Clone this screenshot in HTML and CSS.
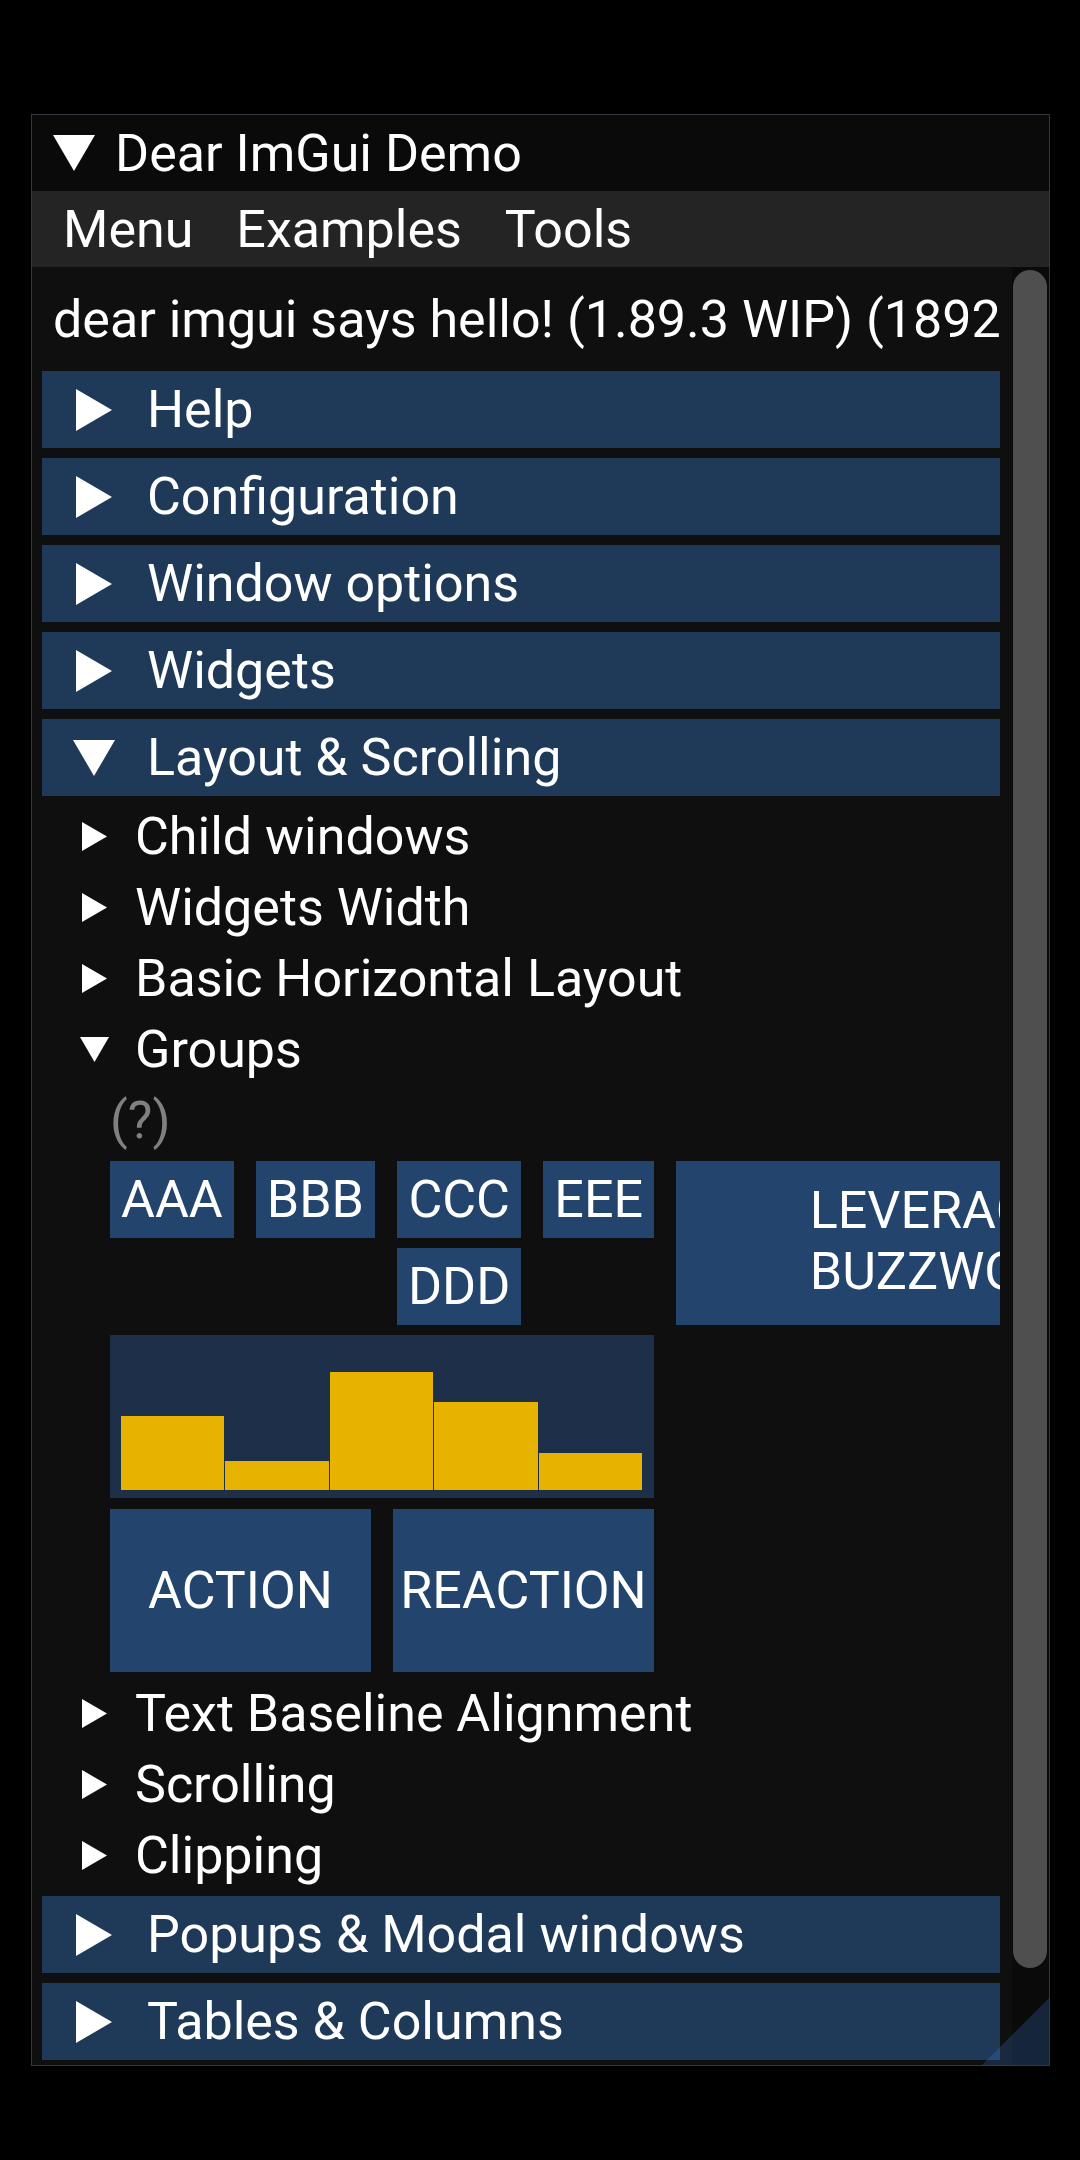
FILE: index.html
```html
<!DOCTYPE html>
<html lang="en">
<head>
<meta charset="utf-8">
<title>Dear ImGui Demo</title>
<link rel="stylesheet" href="styles.css">
</head>
<body>
<div class="window">
  <div class="titlebar">
    <svg class="arrow-lg" viewBox="0 0 42 42"><polygon points="0,3 42,3 21,39" fill="#fff"/></svg>
    <span class="title">Dear ImGui Demo</span>
  </div>
  <div class="menubar">
    <span>Menu</span><span>Examples</span><span>Tools</span>
  </div>
  <div class="body">
    <div class="content">
      <div class="clip">
        <div class="text-line">dear imgui says hello! (1.89.3 WIP) (18927)</div>

        <div class="header"><svg class="arrow-lg" viewBox="0 0 42 42"><polygon points="3,0 39,21 3,42" fill="#fff"/></svg><span class="label">Help</span></div>
        <div class="header"><svg class="arrow-lg" viewBox="0 0 42 42"><polygon points="3,0 39,21 3,42" fill="#fff"/></svg><span class="label">Configuration</span></div>
        <div class="header"><svg class="arrow-lg" viewBox="0 0 42 42"><polygon points="3,0 39,21 3,42" fill="#fff"/></svg><span class="label">Window options</span></div>
        <div class="header"><svg class="arrow-lg" viewBox="0 0 42 42"><polygon points="3,0 39,21 3,42" fill="#fff"/></svg><span class="label">Widgets</span></div>
        <div class="header"><svg class="arrow-lg" viewBox="0 0 42 42"><polygon points="0,3 42,3 21,39" fill="#fff"/></svg><span class="label">Layout &amp; Scrolling</span></div>

        <div class="tree"><svg class="arrow-sm" viewBox="0 0 29 29"><polygon points="2,0 27,14.5 2,29" fill="#fff"/></svg><span class="label">Child windows</span></div>
        <div class="tree"><svg class="arrow-sm" viewBox="0 0 29 29"><polygon points="2,0 27,14.5 2,29" fill="#fff"/></svg><span class="label">Widgets Width</span></div>
        <div class="tree"><svg class="arrow-sm" viewBox="0 0 29 29"><polygon points="2,0 27,14.5 2,29" fill="#fff"/></svg><span class="label">Basic Horizontal Layout</span></div>
        <div class="tree"><svg class="arrow-sm" viewBox="0 0 29 29"><polygon points="0,2 29,2 14.5,27" fill="#fff"/></svg><span class="label">Groups</span></div>

        <div class="indent">
          <div class="disabled">(?)</div>
          <div class="btn-row">
            <div class="btn">AAA</div>
            <div class="btn">BBB</div>
            <div class="btn-col">
              <div class="btn">CCC</div>
              <div class="btn">DDD</div>
            </div>
            <div class="btn">EEE</div>
            <div class="btn big"><span class="multi">LEVERAGE<br>BUZZWORD</span></div>
          </div>
          <div class="plot">
            <div class="bar" style="height:50%"></div>
            <div class="bar" style="height:20%"></div>
            <div class="bar" style="height:80%"></div>
            <div class="bar" style="height:60%"></div>
            <div class="bar" style="height:25%"></div>
          </div>
          <div class="ar-row">
            <div class="btn tall">ACTION</div>
            <div class="btn tall">REACTION</div>
          </div>
        </div>

        <div class="tree"><svg class="arrow-sm" viewBox="0 0 29 29"><polygon points="2,0 27,14.5 2,29" fill="#fff"/></svg><span class="label">Text Baseline Alignment</span></div>
        <div class="tree"><svg class="arrow-sm" viewBox="0 0 29 29"><polygon points="2,0 27,14.5 2,29" fill="#fff"/></svg><span class="label">Scrolling</span></div>
        <div class="tree"><svg class="arrow-sm" viewBox="0 0 29 29"><polygon points="2,0 27,14.5 2,29" fill="#fff"/></svg><span class="label">Clipping</span></div>

        <div class="header"><svg class="arrow-lg" viewBox="0 0 42 42"><polygon points="3,0 39,21 3,42" fill="#fff"/></svg><span class="label">Popups &amp; Modal windows</span></div>
        <div class="header"><svg class="arrow-lg" viewBox="0 0 42 42"><polygon points="3,0 39,21 3,42" fill="#fff"/></svg><span class="label">Tables &amp; Columns</span></div>
      </div>
    </div>
    <div class="scrollbar"><div class="grab"></div></div>
  </div>
  <div class="grip"></div>
</div>
</body>
</html>
```

FILE: styles.css
```css
html, body {
  margin: 0;
  padding: 0;
  background: #000;
}

body {
  font-family: Roboto, "Liberation Sans", sans-serif;
  font-size: 52px;
  line-height: 61px;
  color: #fff;
  width: 1080px;
  height: 2160px;
  overflow: hidden;
}

.window {
  position: relative;
  margin: 114px 0 0 31px;
  width: 1019px;
  height: 1952px;
  box-sizing: border-box;
  border: 1px solid #37373f;
  display: flex;
  flex-direction: column;
  overflow: hidden;
}

.titlebar {
  height: 76px;
  flex-shrink: 0;
  background: #0a0a0a;
  display: flex;
  align-items: center;
  padding-left: 21px;
}

.titlebar .title {
  margin-left: 20px;
  white-space: nowrap;
}

.arrow-lg {
  width: 42px;
  height: 42px;
  flex-shrink: 0;
  display: block;
}

.arrow-sm {
  width: 29px;
  height: 29px;
  flex-shrink: 0;
  display: block;
}

.menubar {
  height: 76px;
  flex-shrink: 0;
  background: #242424;
  display: flex;
  align-items: center;
  gap: 43px;
  padding-left: 31px;
  white-space: nowrap;
}

.body {
  flex: 1;
  display: flex;
  min-height: 0;
}

.content {
  flex: 1;
  min-width: 0;
  background: #0f0f0f;
  padding: 22px 12px 0 10px;
  display: flex;
  flex-direction: column;
}

.clip {
  flex: 1;
  overflow: hidden;
}

.text-line {
  height: 61px;
  padding-left: 11px;
  white-space: nowrap;
  margin-bottom: 21px;
}

.header {
  height: 77px;
  margin-bottom: 10px;
  background: #1f3958;
  display: flex;
  align-items: center;
  padding-left: 31px;
  white-space: nowrap;
}

.header .label {
  margin-left: 32px;
}

.tree {
  height: 61px;
  margin-bottom: 10px;
  display: flex;
  align-items: center;
  padding-left: 38px;
  white-space: nowrap;
}

.tree .label {
  margin-left: 26px;
}

.indent {
  padding-left: 68px;
}

.disabled {
  height: 61px;
  margin-bottom: 10px;
  color: #808080;
}

.btn-row {
  display: flex;
  align-items: flex-start;
  gap: 22px;
  margin-bottom: 10px;
}

.btn-row > * {
  flex-shrink: 0;
}

.btn-col {
  display: flex;
  flex-direction: column;
  gap: 10px;
}

.btn {
  height: 77px;
  line-height: 77px;
  padding: 0 11px;
  background: #23456d;
  text-align: center;
  white-space: nowrap;
}

.btn.big {
  width: 544px;
  height: 164px;
  box-sizing: border-box;
  display: flex;
  align-items: center;
  justify-content: center;
  line-height: 61px;
}

.btn.big .multi {
  display: block;
  text-align: left;
  margin-top: -5px;
}

.plot {
  width: 544px;
  height: 163px;
  box-sizing: border-box;
  padding: 7.5px 12px 8px 11px;
  margin-bottom: 11px;
  background: #1d2f49;
  display: flex;
  align-items: flex-end;
  gap: 1px;
}

.bar {
  flex: 1;
  background: #e6b300;
}

.ar-row {
  display: flex;
  gap: 22px;
  margin-bottom: 11px;
}

.btn.tall {
  width: 261px;
  height: 163px;
  box-sizing: border-box;
  padding: 0;
  line-height: 163px;
}

.scrollbar {
  width: 37px;
  flex-shrink: 0;
  background: #0a0a0a;
  padding: 3px 2px 0 1px;
  box-sizing: border-box;
}

.grab {
  height: 1698px;
  background: #4f4f4f;
  border-radius: 17px;
}

.grip {
  position: absolute;
  right: 0;
  bottom: 0;
  width: 67px;
  height: 67px;
  background: rgba(66, 150, 250, 0.2);
  clip-path: polygon(100% 0, 100% 100%, 0 100%);
}
```
